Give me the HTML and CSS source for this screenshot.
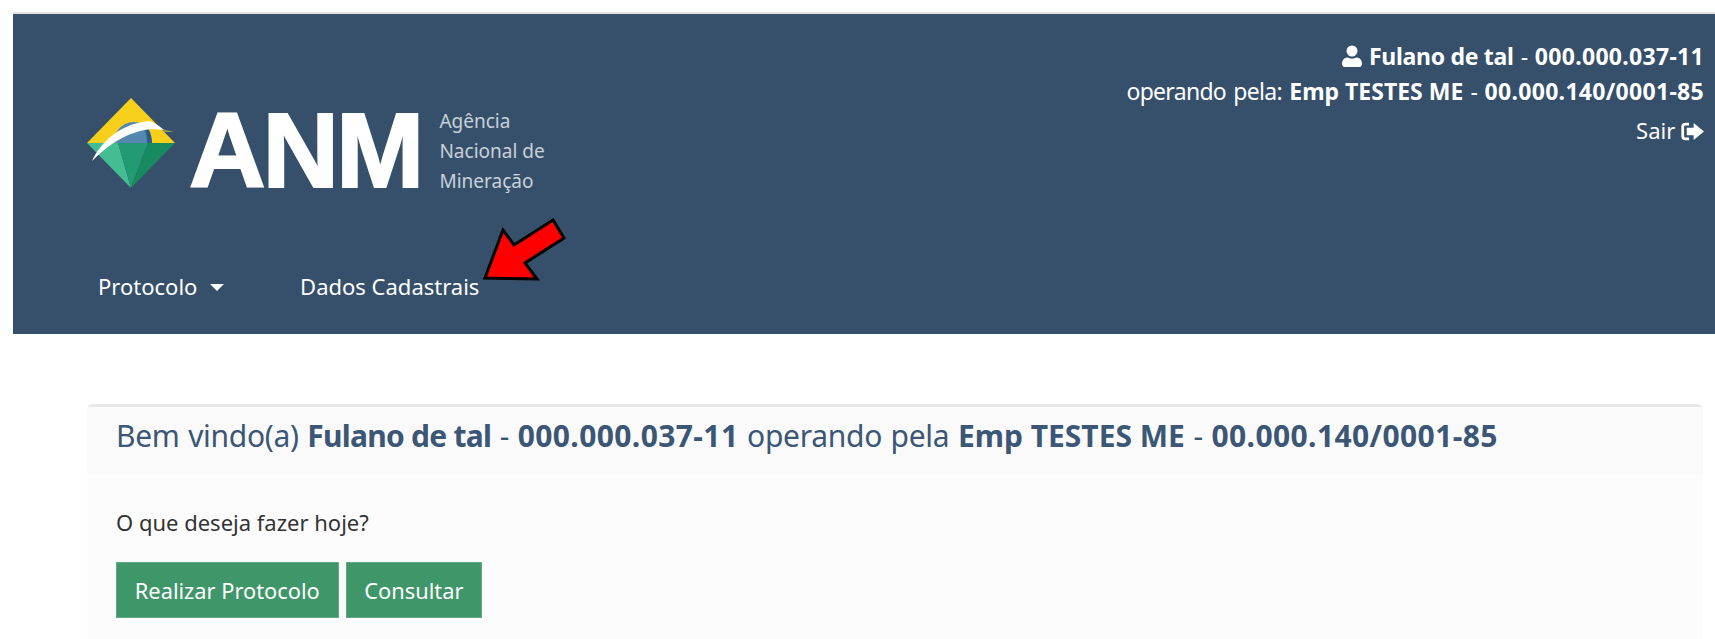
FILE: index.html
```html
<!DOCTYPE html>
<html lang="en">
<head>
    <meta charset="UTF-8">
    <title>ANM - Protocolo Digital</title>
    <link rel="stylesheet" href="styles.css">
</head>
<body>

    <header class="banner">
        <div class="banner-top">
            <div class="logo">
                <svg class="logo-mark" width="90" height="92" viewBox="0 0 90 92">
                    <polygon points="45,0 89,45 1,45" fill="#f8d01c"/>
                    <path d="M26 45 C30 30 38 24 48 24 C57 24 64 32 66 45 Z" fill="#5488b0"/>
                    <path d="M60 27 C64 32 66 38 66 45 L61 45 C61 38 60 32 56 26 Z" fill="#2b5c88"/>
                    <polygon points="1,45 32,45 45,90" fill="#45bd92"/>
                    <polygon points="32,45 62,45 45,90" fill="#229a74"/>
                    <polygon points="62,45 89,45 45,90" fill="#178a60"/>
                    <path d="M76 31 L88 34 L78 34 Z" fill="#8f9a5a"/>
                    <path d="M6 63 C14 46 32 26 63 23 C70 25 74 29 78 32 C60 29 35 34 6 63 Z" fill="#ffffff"/>
                </svg>
                <span class="logo-letters">ANM</span>
                <span class="logo-name">Agência<br>Nacional de<br>Mineração</span>
            </div>
            <div class="user-info">
                <p class="user-line">
                    <svg class="icon-user" width="20" height="22" viewBox="0 0 20 22">
                        <circle cx="10" cy="6" r="5.5" fill="#fff"/>
                        <path d="M0 19 C0 14.5 3 12.5 5.5 12.5 C8 14 12 14 14.5 12.5 C17 12.5 20 14.5 20 19 C20 20.5 19 22 17.5 22 L2.5 22 C1 22 0 20.5 0 19 Z" fill="#fff"/>
                    </svg>
                    <b class="name">Fulano de tal</b> - <b class="num">000.000.037-11</b>
                </p>
                <p class="user-line">operando pela: <b>Emp TESTES ME</b> - <b class="num">00.000.140/0001-85</b></p>
                <p class="user-line exit">Sair
                    <svg class="icon-exit" width="23" height="19" viewBox="0 0 20 18" preserveAspectRatio="none">
                        <path d="M7 2 H4 C2.5 2 1.5 3 1.5 4.5 V13.5 C1.5 15 2.5 16 4 16 H7" fill="none" stroke="#fff" stroke-width="2.4"/>
                        <polygon points="11,1 20,9 11,17 11,12.5 5,12.5 5,5.5 11,5.5" fill="#fff"/>
                    </svg>
                </p>
            </div>
        </div>
        <nav class="menu">
            <a class="menu-item">Protocolo <span class="caret"></span></a>
            <a class="menu-item">Dados Cadastrais</a>
        </nav>
        <svg class="arrow" width="84" height="64" viewBox="0 0 84 64">
            <polygon points="2,60 20,12 31,27 70,2 81,20 42,45 54,61" fill="#ff0000" stroke="#000" stroke-width="3"/>
        </svg>
    </header>

    <section class="card">
        <h2 class="card-title">Bem vindo(a) <b class="name">Fulano de tal</b> - <b class="num">000.000.037-11</b> operando pela <b>Emp TESTES ME</b> - <b class="num">00.000.140/0001-85</b></h2>
        <div class="card-body">
            <p class="question">O que deseja fazer hoje?</p>
            <div class="actions">
                <button class="btn">Realizar Protocolo</button>
                <button class="btn">Consultar</button>
            </div>
        </div>
    </section>

</body>
</html>
```

FILE: styles.css
```css
body {
    font-family: "Noto Sans", "Open Sans", sans-serif;
    font-size: 22px;
    background: white;
    margin: 0;
    padding: 12px 0 0 13px;
    height: 639px;
    overflow: hidden;
    box-sizing: border-box;
}

p {
    margin: 0;
}

b {
    letter-spacing: 0;
    word-spacing: 0;
}

.banner {
    position: relative;
    background-color: #36506b;
    border-top: 2px solid #e2e2e2;
    height: 320px;
    color: white;
}

.banner-top {
    display: flex;
    justify-content: space-between;
    align-items: flex-start;
    padding: 0 11px 0 73px;
    height: 250px;
}

.logo {
    display: flex;
    align-items: flex-start;
    padding-top: 84px;
}

.logo-mark {
    flex: none;
}

.logo-letters {
    font-family: "Liberation Sans", Arial, sans-serif;
    font-weight: 700;
    font-size: 106px;
    line-height: 78px;
    letter-spacing: -3px;
    margin: 13px 0 0 13px;
    -webkit-text-stroke: 2px white;
}

.logo-name {
    font-size: 19px;
    line-height: 30px;
    color: #c9d1da;
    margin: 8px 0 0 18px;
}

.user-info {
    padding-top: 25px;
    text-align: right;
    font-size: 23px;
    line-height: 35px;
    letter-spacing: -0.7px;
    word-spacing: 2px;
}

.user-info .name {
    letter-spacing: -0.3px;
}

.user-info .num {
    letter-spacing: 0.3px;
}

.exit {
    margin-top: 4px;
    font-size: 22px;
    letter-spacing: 0;
    word-spacing: 0;
}

.icon-user {
    vertical-align: -2px;
}

.icon-exit {
    vertical-align: -2px;
}

.menu {
    display: flex;
    padding-left: 85px;
}

.menu-item {
    line-height: 44px;
    margin-right: 76px;
}

.caret {
    display: inline-block;
    border-top: 7px solid white;
    border-left: 7px solid transparent;
    border-right: 7px solid transparent;
    margin-left: 7px;
    vertical-align: 4px;
}

.arrow {
    position: absolute;
    left: 470px;
    top: 204px;
}

.card {
    background: #fbfbfb;
    border-top: 3px solid #e8e8e8;
    border-radius: 6px 6px 0 0;
    margin: 70px 12px 0 74px;
    height: 240px;
}

.card-title {
    font-size: 30px;
    font-weight: 400;
    color: #3b5775;
    background: #fafafa;
    margin: 0;
    padding: 0 29px;
    height: 67px;
    line-height: 58px;
    letter-spacing: -0.3px;
    word-spacing: 1.1px;
}

.card-title .name {
    letter-spacing: -0.75px;
}

.card-title .num {
    letter-spacing: 0.4px;
}

.card-body {
    padding: 26px 29px 25px;
    background: #fcfcfc;
}

.question {
    color: #333;
    line-height: 44px;
    margin-bottom: 18px;
}

.actions {
    display: flex;
    gap: 7px;
}

.btn {
    background-color: #3e9669;
    color: white;
    border: 1px solid #62ab86;
    font-family: inherit;
    font-size: 21.8px;
    height: 56px;
    padding: 0 17.8px;
}
```
